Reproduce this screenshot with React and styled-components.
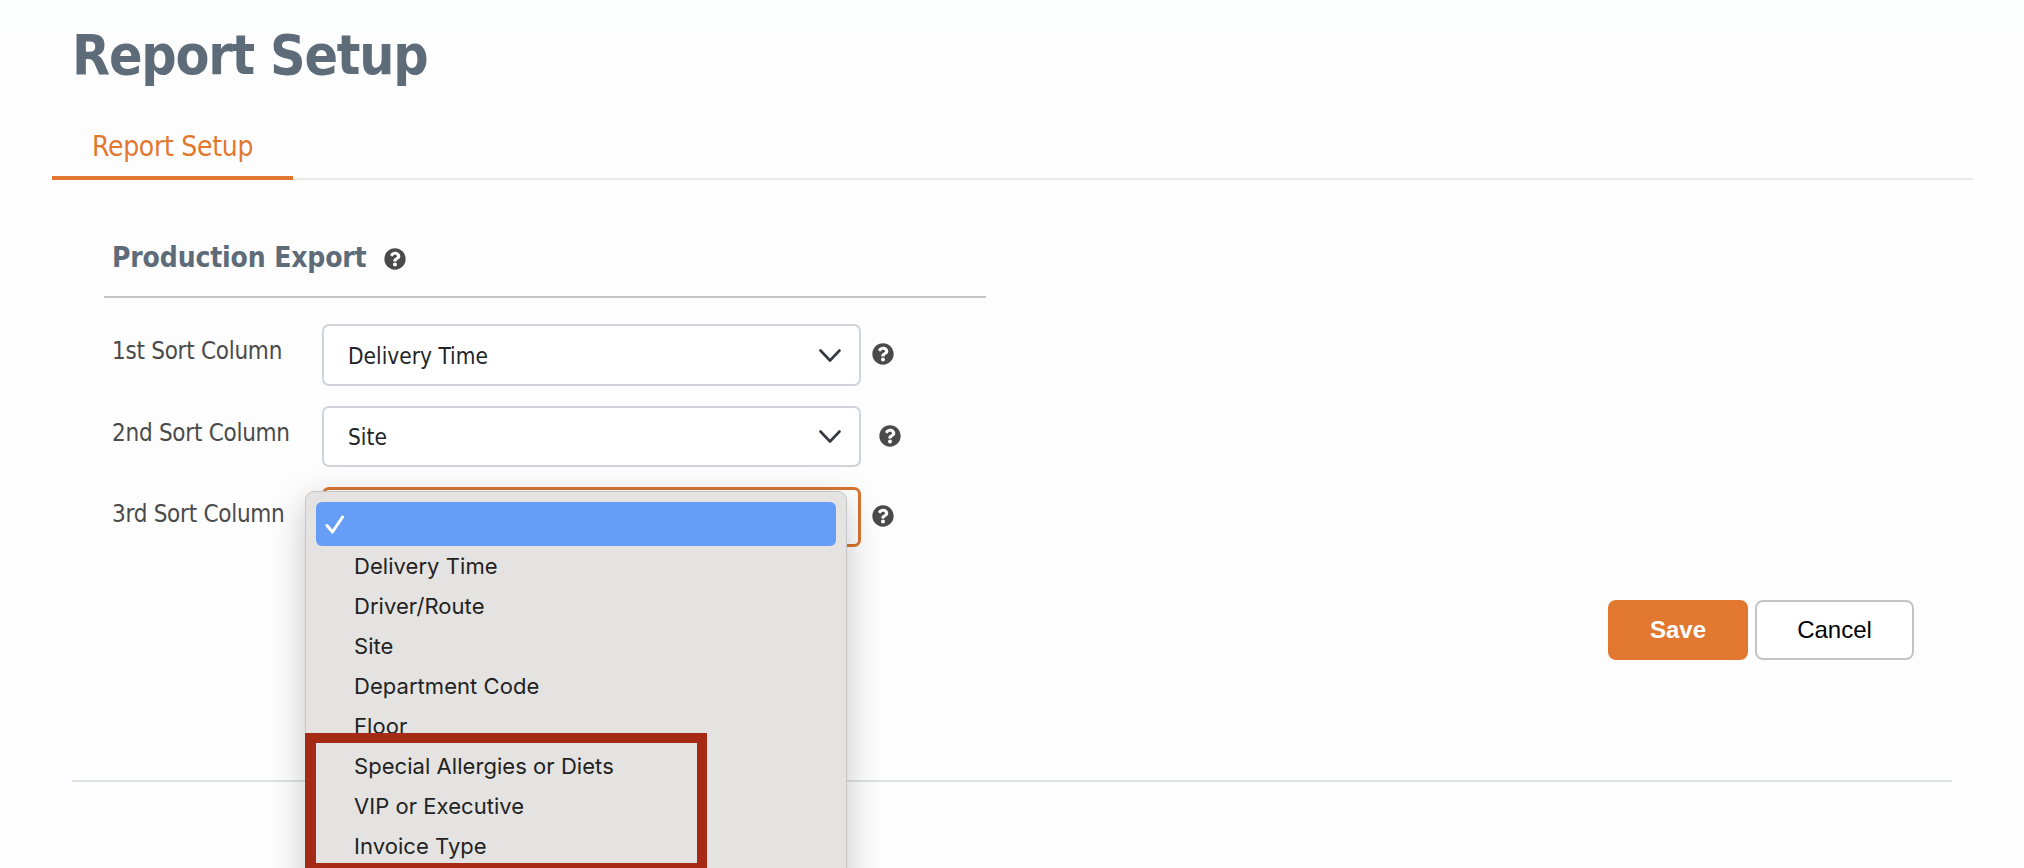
import { FaQuestionCircle } from 'react-icons/fa';
import styled, { createGlobalStyle } from 'styled-components';

const sortOptions = [
  'Delivery Time',
  'Driver/Route',
  'Site',
  'Department Code',
  'Floor',
  'Special Allergies or Diets',
  'VIP or Executive',
  'Invoice Type',
];

const Chevron = () => (
  <svg width="22" height="14" viewBox="0 0 22 14" fill="none">
    <path d="M1.5 1.5 11 11.5 20.5 1.5" stroke="#343a40" strokeWidth="2.6" strokeLinecap="round" strokeLinejoin="round" />
  </svg>
);

const App = () => {
  return (
    <Page>
      <GlobalStyle />
      <Title>Report Setup</Title>
      <TabBar>
        <Tab>Report Setup</Tab>
      </TabBar>

      <Section>
        <SectionHeader>
          <SectionTitle>Production Export</SectionTitle>
          <HelpIcon $top={8} />
        </SectionHeader>

        <Rows>
          <Row $height={62}>
            <Label>1st Sort Column</Label>
            <Select>
              Delivery Time
              <Chevron />
            </Select>
            <HelpIcon />
          </Row>
          <Row $height={61}>
            <Label>2nd Sort Column</Label>
            <Select>
              Site
              <Chevron />
            </Select>
            <HelpIcon $shift={7} />
          </Row>
          <Row $height={60}>
            <Label>3rd Sort Column</Label>
            <Select $focused>
              <Menu>
                <SelectedOption>
                  <svg width="20" height="19" viewBox="0 0 20 19" fill="none">
                    <path d="M2 10.5 7.5 17 17.5 2" stroke="#fff" strokeWidth="3" strokeLinecap="round" strokeLinejoin="round" />
                  </svg>
                </SelectedOption>
                {sortOptions.map((option) => (
                  <Option key={option}>{option}</Option>
                ))}
                <Annotation />
              </Menu>
            </Select>
            <HelpIcon $top={18} />
          </Row>
        </Rows>
      </Section>

      <Actions>
        <SaveButton>Save</SaveButton>
        <CancelButton>Cancel</CancelButton>
      </Actions>
      <BottomRule />
    </Page>
  );
};

const GlobalStyle = createGlobalStyle`
  html, body {
    margin: 0;
    height: 100%;
    overflow: hidden;
    background: #fdfdfe;
  }
`;

const Page = styled.div`
  height: 868px;
  overflow: hidden;
  background: linear-gradient(#fcfefe 34px, #fdfdfe 34px);
  font-family: 'DejaVu Sans Condensed', 'DejaVu Sans', sans-serif;
`;

const Title = styled.h1`
  margin: 0;
  padding: 22px 0 0 72px;
  height: 118px;
  box-sizing: border-box;
  font-size: 55px;
  line-height: 66px;
  font-weight: 700;
  letter-spacing: -1.2px;
  color: #5e6c7a;
`;

const TabBar = styled.div`
  margin: 0 51px 0 52px;
  height: 62px;
  box-sizing: border-box;
  border-bottom: 2px solid #e8e8e8;
`;

const Tab = styled.div`
  width: 241px;
  height: 62px;
  box-sizing: border-box;
  padding: 12px 0 0 40px;
  border-bottom: 4px solid #e27830;
  font-size: 28px;
  line-height: 34px;
  letter-spacing: -0.3px;
  color: #e27830;
`;

const Section = styled.section`
  margin: 44px 0 0 104px;
  width: 882px;
`;

const SectionHeader = styled.div`
  height: 74px;
  box-sizing: border-box;
  padding: 16px 0 0 8px;
  display: flex;
  align-items: flex-start;
  gap: 17px;
  border-bottom: 2px solid #c4c4c4;
`;

const SectionTitle = styled.h2`
  margin: 0;
  font-size: 28px;
  line-height: 36px;
  font-weight: 700;
  letter-spacing: -0.15px;
  color: #5e6c7a;
`;

const HelpIcon = styled(FaQuestionCircle)`
  flex: none;
  width: 22px;
  height: 22px;
  margin: ${(props) => props.$top ?? 19}px 0 0 ${(props) => props.$shift || 0}px;
  color: #4a4a4a;
`;

const Rows = styled.div`
  margin-top: 26px;
  display: flex;
  flex-direction: column;
  gap: 20px;
`;

const Row = styled.div`
  display: flex;
  align-items: flex-start;
  gap: 11px;
  padding-left: 8px;
  height: ${(props) => props.$height}px;
`;

const Label = styled.label`
  width: 199px;
  padding-top: 12px;
  font-size: 24px;
  line-height: 30px;
  letter-spacing: -0.27px;
  color: #4a4a4a;
`;

const Select = styled.div`
  position: relative;
  width: 539px;
  height: 100%;
  box-sizing: border-box;
  padding: 1px 18px 0 24px;
  display: flex;
  align-items: center;
  justify-content: space-between;
  background: #fff;
  border: ${(props) => (props.$focused ? '3px solid #d97530' : '2px solid #ced4da')};
  border-radius: 7px;
  font-size: 22.5px;
  color: #212529;
`;

const Menu = styled.div`
  position: absolute;
  left: -20px;
  top: 1px;
  width: 542px;
  height: 420px;
  box-sizing: border-box;
  padding: 10px;
  background: #e4e3e1;
  border: 1px solid #c6c6c6;
  border-radius: 9px;
  box-shadow: 0 10px 34px rgba(0, 0, 0, 0.22);
  font-family: Inter, 'Liberation Sans', sans-serif;
`;

const SelectedOption = styled.div`
  height: 44px;
  padding-left: 9px;
  display: flex;
  align-items: center;
  background: #669df6;
  border-radius: 6px;
`;

const Option = styled.div`
  height: 40px;
  padding-left: 38px;
  font-size: 22px;
  line-height: 40px;
  letter-spacing: 0.05px;
  color: #222;
`;

const Annotation = styled.div`
  position: absolute;
  left: -1px;
  top: 241px;
  width: 402px;
  height: 140px;
  box-sizing: border-box;
  border: solid #a52b16;
  border-width: 10px 10px 10px 11px;
`;

const Actions = styled.div`
  margin-top: 53px;
  padding-right: 110px;
  display: flex;
  justify-content: flex-end;
  gap: 7px;
`;

const SaveButton = styled.button`
  width: 140px;
  height: 60px;
  padding: 0;
  border: none;
  border-radius: 8px;
  background: #e27830;
  color: #fff;
  font-family: 'Liberation Sans', Arial, sans-serif;
  font-size: 24px;
  font-weight: 700;
`;

const CancelButton = styled.button`
  width: 159px;
  height: 60px;
  padding: 0;
  background: #fff;
  border: 2px solid #c4c4c4;
  border-radius: 8px;
  color: #000;
  font-family: 'Liberation Sans', Arial, sans-serif;
  font-size: 24px;
`;

const BottomRule = styled.div`
  margin: 120px 72px 0;
  height: 2px;
  background: #dee2e6;
`;

export default App;
